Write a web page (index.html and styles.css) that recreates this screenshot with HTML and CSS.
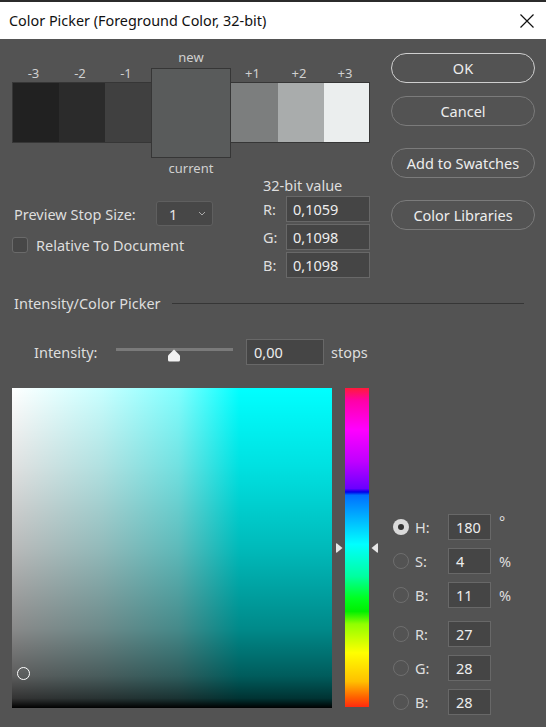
FILE: index.html
```html
<!DOCTYPE html>
<html lang="en">
<head>
    <meta charset="UTF-8">
    <title>Color Picker</title>
    <link rel="stylesheet" href="styles.css">
</head>
<body>
    <!-- Title Bar -->
    <header class="titlebar">
        <span class="title">Color Picker (Foreground Color, 32-bit)</span>
        <svg class="close" width="14" height="14" viewBox="0 0 14 14">
            <path d="M0.5 0.5 L13.5 13.5 M13.5 0.5 L0.5 13.5" stroke="#111" stroke-width="1.2" fill="none"/>
        </svg>
    </header>

    <main class="dialog">
        <!-- Preview + Buttons -->
        <section class="top">
            <div class="left-col">
                <div class="preview">
                    <span class="lbl new-lbl">new</span>
                    <span class="lbl c1">-3</span>
                    <span class="lbl c2">-2</span>
                    <span class="lbl c3">-1</span>
                    <span class="lbl c5">+1</span>
                    <span class="lbl c6">+2</span>
                    <span class="lbl c7">+3</span>
                    <div class="sw c1 first" style="background:#212121"></div>
                    <div class="sw c2" style="background:#2b2b2b"></div>
                    <div class="sw c3" style="background:#404040"></div>
                    <div class="center-box"></div>
                    <div class="sw c5" style="background:#7c7e7e"></div>
                    <div class="sw c6" style="background:#a9acac"></div>
                    <div class="sw c7 last" style="background:#ebeeee"></div>
                    <span class="lbl cur-lbl">current</span>
                </div>

                <div class="values">
                    <div class="settings">
                        <div class="stop-row">
                            <span class="stop-label">Preview Stop Size:</span>
                            <div class="select">
                                <span>1</span>
                                <svg width="8" height="5" viewBox="0 0 8 5"><path d="M1 1 L4 4 L7 1" stroke="#aaa" stroke-width="1" fill="none"/></svg>
                            </div>
                        </div>
                        <label class="check-row">
                            <span class="checkbox"></span>
                            <span>Relative To Document</span>
                        </label>
                    </div>
                    <div class="bit-values">
                        <div class="bit-title">32-bit value</div>
                        <div class="bit-row"><span class="bit-label">R:</span><span class="field wide">0,1059</span></div>
                        <div class="bit-row"><span class="bit-label">G:</span><span class="field wide">0,1098</span></div>
                        <div class="bit-row"><span class="bit-label">B:</span><span class="field wide">0,1098</span></div>
                    </div>
                </div>
            </div>

            <div class="buttons">
                <button class="btn ok">OK</button>
                <button class="btn">Cancel</button>
                <button class="btn spaced">Add to Swatches</button>
                <button class="btn spaced">Color Libraries</button>
            </div>
        </section>

        <!-- Intensity -->
        <div class="section-head">
            <span>Intensity/Color Picker</span>
            <span class="rule"></span>
        </div>
        <div class="intensity">
            <span class="int-label">Intensity:</span>
            <div class="slider">
                <svg class="thumb" width="14" height="13" viewBox="0 0 14 13">
                    <path d="M7 0.5 L13 6.5 L13 11 Q13 12.5 11.5 12.5 L2.5 12.5 Q1 12.5 1 11 L1 6.5 Z" fill="#f2f2f2"/>
                </svg>
            </div>
            <span class="field int-field">0,00</span>
            <span class="unit">stops</span>
        </div>

        <!-- Picker -->
        <section class="picker">
            <div class="field-area">
                <div class="darken"></div>
                <span class="marker"></span>
            </div>
            <div class="hue-wrap">
                <svg class="arrow arrow-left" width="7" height="10" viewBox="0 0 7 10"><path d="M0 1 Q0 0 1 0.5 L6.5 5 L1 9.5 Q0 10 0 9 Z" fill="#e6e6e6"/></svg>
                <div class="hue-bar"></div>
                <svg class="arrow arrow-right" width="7" height="10" viewBox="0 0 7 10"><path d="M7 1 Q7 0 6 0.5 L0.5 5 L6 9.5 Q7 10 7 9 Z" fill="#e6e6e6"/></svg>
            </div>
            <div class="controls">
                <div class="ctl-row"><span class="radio on"></span><span class="ctl-label">H:</span><span class="field small">180</span><span class="ctl-unit deg">°</span></div>
                <div class="ctl-row"><span class="radio"></span><span class="ctl-label">S:</span><span class="field small">4</span><span class="ctl-unit">%</span></div>
                <div class="ctl-row"><span class="radio"></span><span class="ctl-label">B:</span><span class="field small">11</span><span class="ctl-unit">%</span></div>
                <div class="ctl-row group"><span class="radio"></span><span class="ctl-label">R:</span><span class="field small">27</span></div>
                <div class="ctl-row"><span class="radio"></span><span class="ctl-label">G:</span><span class="field small">28</span></div>
                <div class="ctl-row"><span class="radio"></span><span class="ctl-label">B:</span><span class="field small">28</span></div>
            </div>
        </section>
    </main>
</body>
</html>
```

FILE: styles.css
```css
/* General */
body {
    margin: 0;
    background-color: #535353;
    font-family: "Noto Sans", "Open Sans", sans-serif;
    font-size: 14.5px;
    color: #dedede;
    overflow: hidden;
}

/* Title Bar */
.titlebar {
    border-top: 2px solid #2b2b2b;
    height: 37px;
    background-color: #ffffff;
    color: #111;
    display: flex;
    align-items: center;
    justify-content: space-between;
    padding: 0 12px 0 9px;
}

.title {
    font-size: 14.4px;
}

/* Dialog */
.dialog {
    padding: 0 11px 0 12px;
}

.top {
    display: flex;
}

.left-col {
    width: 358px;
}

/* Preview Strip */
.preview {
    margin-top: 11px;
    display: grid;
    grid-template-columns: 47px 46px 46px 80px 47px 46px 46px;
    grid-template-rows: 16px 16px 61px 15px 18px;
}

.lbl {
    font-size: 13px;
    color: #d0d0d0;
    text-align: center;
    line-height: 15px;
}

.new-lbl { grid-column: 4; grid-row: 1; }
.cur-lbl { grid-column: 4; grid-row: 5; line-height: 20px; }

.lbl.c1, .lbl.c2, .lbl.c3, .lbl.c5, .lbl.c6, .lbl.c7 { grid-row: 2; padding-right: 4px; }
.c1 { grid-column: 1; }
.c2 { grid-column: 2; }
.c3 { grid-column: 3; }
.c5 { grid-column: 5; }
.c6 { grid-column: 6; }
.c7 { grid-column: 7; }

.sw {
    grid-row: 3;
    border-top: 1px solid #363636;
    border-bottom: 1px solid #363636;
}

.sw.first { border-left: 1px solid #363636; }
.sw.last { border-right: 1px solid #363636; }

.center-box {
    grid-column: 4;
    grid-row: 2 / 5;
    margin-top: 2px;
    background-color: #595b5b;
    border: 1px solid #363636;
}

/* Values */
.values {
    display: flex;
    justify-content: space-between;
    margin-top: 2px;
}

.settings {
    padding-left: 2px;
}

.stop-row {
    display: flex;
    align-items: center;
    margin-top: 23px;
}

.stop-label {
    width: 142px;
}

.select {
    width: 57px;
    height: 25px;
    box-sizing: border-box;
    background-color: #474747;
    border: 1px solid #5f5f5f;
    border-radius: 3px;
    display: flex;
    align-items: center;
    justify-content: space-between;
    padding: 0 6px 0 12px;
    color: #e8e8e8;
}

.check-row {
    display: flex;
    align-items: center;
    gap: 8px;
    margin-top: 9px;
    margin-left: -2px;
}

.checkbox {
    width: 14px;
    height: 14px;
    background-color: #474747;
    border: 1px solid #6a6a6a;
    border-radius: 3px;
}

.bit-values {
    width: 107px;
}

.bit-title {
    height: 18px;
    line-height: 15px;
}

.bit-row {
    display: flex;
    align-items: center;
    margin-bottom: 2px;
}

.bit-row:last-child {
    margin-bottom: 0;
}

.bit-label {
    width: 23px;
}

.field {
    box-sizing: border-box;
    height: 26px;
    line-height: 24px;
    background-color: #454545;
    border: 1px solid #686868;
    color: #ededed;
    padding-left: 6px;
}

.field.wide {
    width: 84px;
}

/* Buttons */
.buttons {
    margin-left: 21px;
    margin-top: 14px;
    width: 144px;
    display: flex;
    flex-direction: column;
    gap: 13px;
}

.btn {
    height: 30px;
    background-color: transparent;
    border: 1px solid #7b7b7b;
    border-radius: 15px;
    color: #ededed;
    font-family: inherit;
    font-size: 14.5px;
}

.btn.ok {
    border: 1.5px solid #cfcfcf;
}

.btn.spaced {
    margin-top: 9px;
}

/* Intensity */
.section-head {
    display: flex;
    align-items: center;
    margin-top: 16px;
    padding-left: 2px;
    margin-right: 11px;
    line-height: 18px;
}

.rule {
    flex: 1;
    height: 1px;
    background-color: #363636;
    margin-left: 11px;
}

.intensity {
    display: flex;
    align-items: center;
    margin-top: 27px;
    padding-left: 22px;
}

.int-label {
    width: 82px;
}

.slider {
    position: relative;
    width: 117px;
    height: 3px;
    background-color: #7a7a7a;
    margin-top: -6px;
}

.thumb {
    position: absolute;
    left: 51px;
    top: 1px;
}

.int-field {
    width: 78px;
    margin-left: 13px;
    padding-left: 7px;
}

.unit {
    margin-left: 7px;
}

/* Picker */
.picker {
    display: flex;
    margin-top: 23px;
}

.field-area {
    position: relative;
    width: 320px;
    height: 320px;
    background: linear-gradient(to right, #ffffff 0%, #c8ffff 28%, #80ffff 52%, #00ffff 71%, #00ffff 100%);
}

.darken {
    position: absolute;
    inset: 0;
    background: linear-gradient(to bottom,
        rgba(0,0,0,0) 0%,
        rgba(0,0,0,0.12) 25%,
        rgba(0,0,0,0.27) 50%,
        rgba(0,0,0,0.46) 75%,
        rgba(0,0,0,0.64) 90%,
        rgba(0,0,0,0.8) 97%,
        rgba(0,0,0,1) 100%);
}

.marker {
    position: absolute;
    left: 5px;
    top: 279px;
    width: 13px;
    height: 13px;
    border: 1px solid #ffffff;
    border-radius: 50%;
    box-sizing: border-box;
}

.hue-wrap {
    position: relative;
    margin-left: 13px;
}

.hue-bar {
    width: 24px;
    height: 319px;
    background: linear-gradient(to bottom,
        #ff1a3a 0%,
        #ff00a8 4%,
        #ff00ff 13%,
        #c000ff 23%,
        #6a00ff 31.5%,
        #0000e8 32.6%,
        #0070ff 33.6%,
        #00c8ff 43%,
        #00ffff 49%,
        #00ffa0 59%,
        #00ff20 66%,
        #00f000 70%,
        #90ff00 74%,
        #ffff00 83%,
        #ffc000 92%,
        #ff6000 97%,
        #ff2a10 100%);
}

.arrow {
    position: absolute;
    top: 155px;
}

.arrow-left { left: -9px; }
.arrow-right { right: -9px; }

.controls {
    margin-left: 24px;
    margin-top: 126px;
    display: flex;
    flex-direction: column;
    gap: 8px;
}

.ctl-row {
    display: flex;
    align-items: center;
}

.ctl-row.group {
    margin-top: 5px;
}

.radio {
    width: 16px;
    height: 16px;
    box-sizing: border-box;
    border: 1px solid #6e6e6e;
    border-radius: 50%;
}

.radio.on {
    background-color: #dadada;
    border: none;
    position: relative;
}

.radio.on::after {
    content: "";
    position: absolute;
    left: 5px;
    top: 5px;
    width: 6px;
    height: 6px;
    border-radius: 50%;
    background-color: #333;
}

.ctl-label {
    width: 33px;
    margin-left: 6px;
}

.field.small {
    width: 43px;
    padding-left: 7px;
}

.ctl-unit {
    margin-left: 8px;
}

.ctl-unit.deg {
    align-self: flex-start;
    line-height: 14px;
}
```
